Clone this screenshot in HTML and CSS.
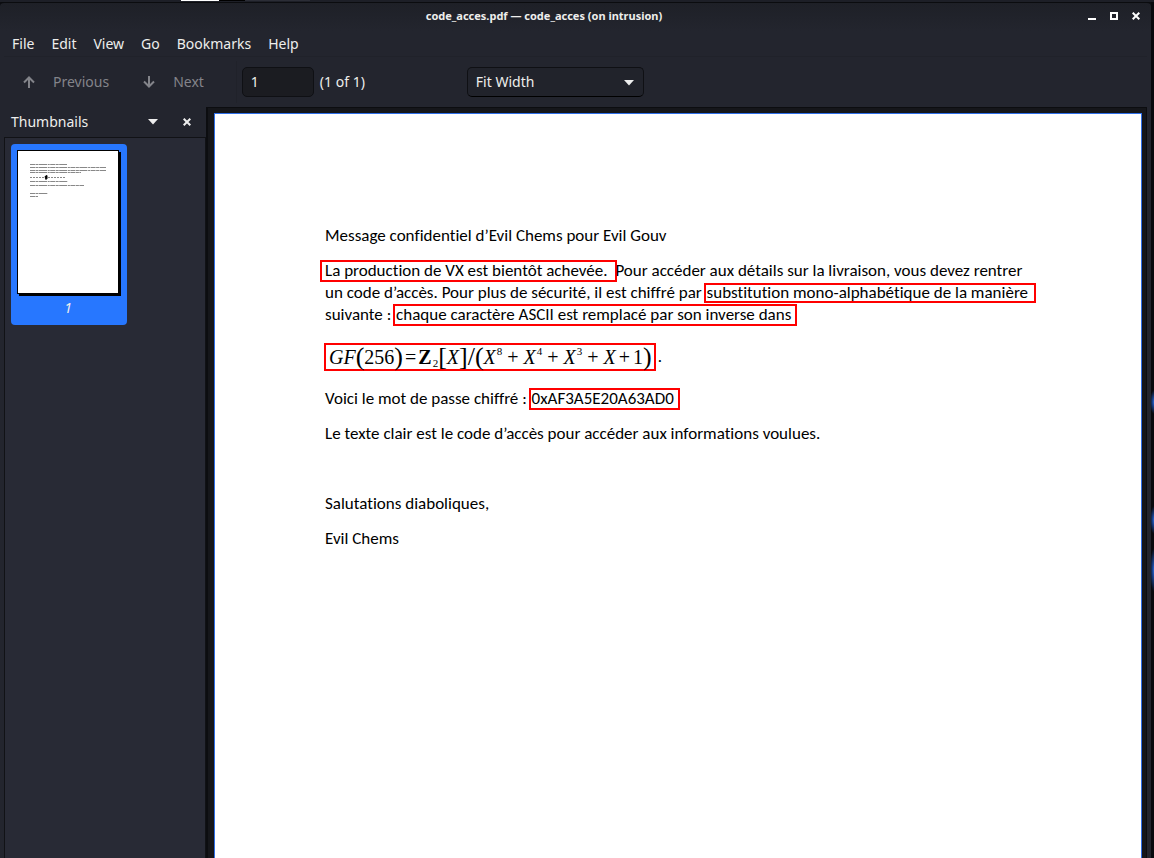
FILE: index.html
```html
<!DOCTYPE html>
<html lang="en">
<head>
<meta charset="utf-8">
<title>code_acces.pdf — code_acces (on intrusion)</title>
<link rel="stylesheet" href="styles.css">
</head>
<body>
<div class="panel"><span class="task task-active"></span><span class="task task-gap"></span><span class="task task-idle"></span></div>
<div class="desktop">
  <div class="window">
    <header class="titlebar">
      <h1 class="title">code_acces.pdf — code_acces (on intrusion)</h1>
      <div class="controls">
        <button class="ctl" aria-label="Minimize"><svg width="8" height="8" viewBox="0 0 8 8"><path d="M0 6h8v2H0z" fill="#fff"/></svg></button>
        <button class="ctl" aria-label="Maximize"><svg width="8" height="8" viewBox="0 0 8 8"><path d="M1 1h6v6H1z" fill="none" stroke="#fff" stroke-width="2"/></svg></button>
        <button class="ctl" aria-label="Close"><svg width="8" height="8" viewBox="0 0 8 8"><path d="M.7.7l6.600 6.600M7.300.7L.7 7.300" stroke="#fff" stroke-width="2"/></svg></button>
      </div>
    </header>
    <nav class="menubar">
      <button>File</button><button>Edit</button><button>View</button><button>Go</button><button>Bookmarks</button><button>Help</button>
    </nav>
    <div class="toolbar">
      <button class="nav" disabled><svg width="14" height="14" viewBox="0 0 14 14"><path d="M7 13V3M2 7.500l5-5 5 5" fill="none" stroke="currentColor" stroke-width="2"/></svg>Previous</button>
      <button class="nav nav-next" disabled><svg width="14" height="14" viewBox="0 0 14 14"><path d="M7 1v10M2 6.500l5 5 5-5" fill="none" stroke="currentColor" stroke-width="2"/></svg>Next</button>
      <div class="pager"><input id="page" type="text" value="1"><label for="page">(1 of 1)</label></div>
      <div class="zoom">
        <select aria-label="Zoom"><option>Fit Width</option></select>
        <svg class="zoom-arrow" width="10" height="6" viewBox="0 0 10 6"><path d="M0 0h10L5 5.500z" fill="#eee"/></svg>
      </div>
    </div>
    <div class="content">
      <aside class="sidebar">
        <div class="side-head">
          <span class="side-title">Thumbnails</span>
          <button class="ctl" aria-label="Choose sidebar"><svg width="10" height="6" viewBox="0 0 10 6"><path d="M0 0h10L5 5.500z" fill="#eee"/></svg></button>
          <button class="ctl" aria-label="Close sidebar"><svg width="8" height="8" viewBox="0 0 8 8"><path d="M.7.7l6.600 6.600M7.300.7L.7 7.300" stroke="#eee" stroke-width="2"/></svg></button>
        </div>
        <div class="thumbs">
          <button class="thumb">
            <svg class="thumb-page" width="100" height="142" viewBox="0 0 100 142">
              <g fill="none" stroke="#888" stroke-width="1" stroke-dasharray="5 .5 3 .5 8 .7 2 .5">
                <path d="M12 13.500h37"/><path d="M12 16.500h76"/><path d="M12 19.500h76"/><path d="M12 21.500h51"/>
                <path d="M12 26.500h14M30 26.500h18" stroke-dasharray="2 1"/><path d="M12 30.500h38"/><path d="M12 34.500h54"/><path d="M12 42.500h18"/><path d="M12 45.500h8"/>
              </g>
              <path d="M27 25.500l2-1v3l-1 1z" stroke="#000"/>
            </svg>
            <span>1</span>
          </button>
        </div>
      </aside>
      <main class="viewer">
        <article class="page">
          <p>Message confidentiel d’Evil Chems pour Evil Gouv</p>
          <p><span class="line"><mark class="first">La production de VX est bientôt achevée. </mark>Pour accéder aux détails sur la livraison, vous devez rentrer</span>
          <span class="line">un code d’accès. Pour plus de sécurité, il est chiffré par <mark class="low">substitution mono-alphabétique de la manière</mark></span>
          <span class="line">suivante : <mark>chaque caractère ASCII est remplacé par son inverse dans</mark></span></p>
          <div class="formula">
            <span class="math"><i>GF</i><span class="tall">(</span>256<span class="tall">)</span><span class="eq">=</span><b>Z</b><sub>2</sub><span class="tall">[</span><i>X</i><span class="tall">]</span><span class="tall">/</span><span class="tall">(</span><i>X</i><sup>8</sup><span class="op">+</span><i>X</i><sup>4</sup><span class="op">+</span><i>X</i><sup>3</sup><span class="op">+</span><i>X</i><span class="plus">+</span>1<span class="tall">)</span></span><span>.</span>
          </div>
          <p>Voici le mot de passe chiffré : <mark>0xAF3A5E20A63AD0</mark></p>
          <p>Le texte clair est le code d’accès pour accéder aux informations voulues.</p>
          <p class="closing">Salutations diaboliques,</p>
          <p>Evil Chems</p>
        </article>
      </main>
    </div>
  </div>
  <div class="wallpaper"></div>
</div>
</body>
</html>
```
FILE: styles.css
```css
* { box-sizing: border-box; }
body {
  margin: 0;
  height: 100vh;
  overflow: hidden;
  display: flex;
  flex-direction: column;
  background: #0c0d11;
  color: #eeeeec;
  font: 14px/20px "Noto Sans", sans-serif;
}
button, input, select { font: inherit; color: inherit; }
button { border: 0; padding: 0; background: none; }
svg { display: block; }

.panel { display: flex; height: 2px; flex: none; padding-left: 181px; background: #1d1f27; }
.task { height: 1px; }
.task-active { width: 38px; background: #fff; }
.task-gap { width: 26px; background: #000; }
.task-idle { width: 65px; background: #2b2d36; }

.desktop { flex: 1; min-height: 0; display: flex; }
.window {
  flex: 1;
  min-width: 0;
  display: flex;
  flex-direction: column;
  border-top: 1px solid #0b0c0f;
  border-radius: 4px 4px 0 0;
  background: linear-gradient(#1e2027, #23252e 28px);
}
.wallpaper {
  width: 3px;
  background:
    radial-gradient(4px 12px at 100% 400px, #2466dc, transparent),
    radial-gradient(4px 14px at 100% 518px, #2466dc, transparent),
    radial-gradient(4px 22px at 100% 568px, #2466dc, transparent),
    #08090d;
}

.titlebar { display: flex; align-items: center; height: 26px; padding-right: 11px; }
.title { flex: 1; margin: 0; text-align: center; font: bold 11px/16px "Noto Sans", sans-serif; }
.controls { display: flex; gap: 14px; }
.ctl { flex: none; display: flex; }

.menubar { display: flex; gap: 17px; height: 28px; margin: 0 4px; padding: 2px 8px 0; align-items: center; border-bottom: 1px solid #20222a; }

.toolbar { display: flex; align-items: center; height: 50px; padding-left: 22px; }
.nav { display: flex; align-items: center; gap: 17px; color: #83848a; }
.nav-next { margin-left: 33px; }
.pager { display: flex; align-items: center; gap: 6px; margin-left: 32px; padding-left: 5px; border-left: 1px solid #20222a; height: 42px; }
.pager input { width: 72px; height: 30px; padding: 0 8px 2px; border: 1px solid #0f1014; border-radius: 5px; background: #1b1c21; }
.zoom { position: relative; margin-left: 102px; }
.zoom select { appearance: none; width: 177px; height: 30px; padding: 0 8px; border: 1px solid #0f1014; border-bottom-color: #000; border-radius: 5px; background: #21232b; }
.zoom-arrow { position: absolute; right: 10px; top: 13px; pointer-events: none; }

.content { flex: 1; min-height: 0; display: flex; padding-right: 4px; }
.sidebar { width: 206px; flex: none; display: flex; flex-direction: column; padding-left: 4px; }
.side-head { display: flex; align-items: center; gap: 25px; height: 30px; padding: 0 15px 0 7px; }
.side-title { flex: 1; }
.thumbs { flex: 1; padding: 6px; border: 1px solid #111216; border-bottom: 0; background: #282a35; }
.thumb { display: flex; flex-direction: column; align-items: center; gap: 4px; width: 116px; height: 181px; padding: 6px 8px 0 6px; border-radius: 4px; background: #2777ff; font-style: italic; }
.thumb-page { box-sizing: content-box; flex: none; border: 1px solid #000; background: #fff; box-shadow: 2px 2px #000; }

.viewer { flex: 1; min-width: 0; padding: 5px 4px 0 6px; border: solid #0c0d10; border-width: 1px 1px 0 2px; background: #15161a; }
.page {
  height: 100%;
  padding: 111px 100px 0 110px;
  border: 1px solid #2f6fe8;
  border-bottom: 0;
  background: #fff;
  color: #000;
  font: 17px/22px Carlito, Lato, sans-serif;
  font-variant-ligatures: none;
  white-space: nowrap;
}
.page p { margin: 0 0 13px; }
.page .closing { margin-top: 48px; }
.line { display: block; }
mark { display: inline-block; padding: 0 4px 0 1px; background: none; color: inherit; line-height: 18px; outline: 2px solid #f00; }
.low { padding-right: 6px; line-height: 16px; }
.first { padding: 0 4px 0 3px; margin: 0 0 0 -3px; white-space: pre; }

.formula { display: flex; align-items: center; gap: 2px; margin: 17px 0 17px -1px; }
.math {
  display: flex;
  align-items: center;
  height: 28px;
  padding: 0 2px 0 3px;
  border: 2px solid #f00;
  font: 20px/22px "Liberation Serif", serif;
}
.tall { font-size: 26px; }
.eq { margin: 0 2px; }
.op { margin: 0 5px; }
.plus { margin: 0 3px; }
.math sub, .math sup { font-size: 11px; line-height: 12px; margin-left: 1px; }
.math sub { align-self: flex-end; }
.math sup { align-self: flex-start; }
```
